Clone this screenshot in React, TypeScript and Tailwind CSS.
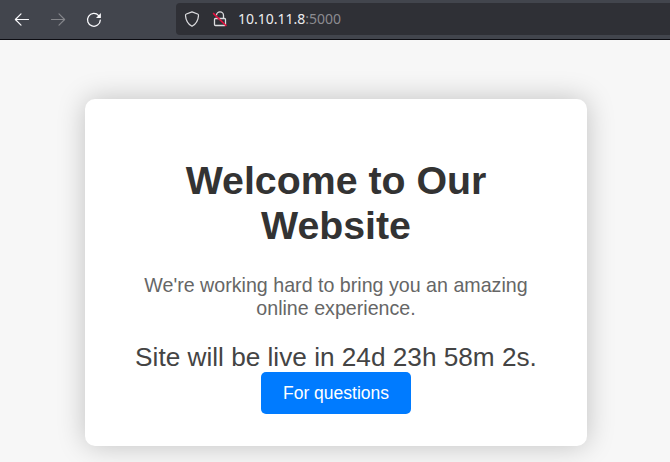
function BrowserBar() {
  return (
    <header className="flex h-10 shrink-0 items-start border-b border-[#0c0c12] bg-[#42454d]">
      <div className="flex h-[39px] w-44 shrink-0 items-center gap-5 pl-3.5">
        <svg className="size-4" viewBox="0 0 16 16" fill="none" stroke="#fbfbfe" strokeWidth="1.2" strokeLinecap="round" strokeLinejoin="round">
          <path d="M14.5 7.5H1.5M7 1.9L1.4 7.5 7 13.1" />
        </svg>
        <svg className="size-4" viewBox="0 0 16 16" fill="none" stroke="#85868b" strokeWidth="1.2" strokeLinecap="round" strokeLinejoin="round">
          <path d="M1.5 7.5h13M9 1.9l5.6 5.6L9 13.1" />
        </svg>
        <svg className="size-4" viewBox="0 0 16 16" fill="none" stroke="#fbfbfe" strokeWidth="1.25" strokeLinecap="round">
          <path d="M12.7 3.6A6.4 6.4 0 1 0 14.3 8.1" />
          <path d="M14.9 1v4.9H10z" fill="#fbfbfe" stroke="none" />
        </svg>
      </div>
      <div className="mt-[3px] flex h-8 flex-1 items-center rounded-l bg-[#2f3036] pl-2">
        <svg className="size-4" viewBox="0 0 16 16" fill="none" stroke="#dcdcdf" strokeWidth="1.2" strokeLinejoin="round">
          <path d="M8 .9L13.6 3Q14.6 3.4 14.5 4.6C14.2 9.2 12.1 13 8 15.3C3.9 13 1.8 9.2 1.5 4.6Q1.4 3.4 2.4 3z" />
        </svg>
        <svg className="ml-3 size-4" viewBox="0 0 16 16" fill="none" stroke="#dcdcdf" strokeWidth="1.3" strokeLinejoin="round">
          <rect x="2.5" y="7.5" width="11" height="7" rx="1" />
          <path d="M4.5 4.4a3.5 3.5 0 0 1 7 0v3.1" />
          <path d="M1.1 2.1L14.4 15" stroke="#e8103f" strokeWidth="1.6" />
        </svg>
        <span className="ml-2.5 font-['Noto_Sans',sans-serif] text-[14px] leading-5 text-[#ececef]">
          10.10.11.8<span className="text-[#8b8b90]">:5000</span>
        </span>
      </div>
    </header>
  );
}

export default function App() {
  return (
    <div className="flex h-[462px] w-[670px] flex-col overflow-hidden bg-[#f7f7f7] font-['Liberation_Sans',Arial,sans-serif]">
      <BrowserBar />
      <main className="ml-[85px] mt-[59px] flex h-[347px] w-[502px] shrink-0 flex-col items-center rounded-[10px] bg-white pt-[59px] text-center shadow-[0_0_28px_rgba(0,0,0,0.22)]">
        <h1 className="text-[39.3px] font-bold leading-[45px] text-[#333]">
          Welcome to Our
          <br />
          Website
        </h1>
        <p className="mt-[26px] text-[19.65px] leading-[23px] text-[#666]">
          We're working hard to bring you an amazing
          <br />
          online experience.
        </p>
        <div className="mt-[22px] whitespace-nowrap text-[26.2px] leading-[30px] text-[#444]">
          Site will be live in 24d 23h 58m 2s.
        </div>
        <button className="h-[42px] w-[150px] rounded-[5px] bg-[#007bff] text-[17.5px] leading-5 text-white">
          For questions
        </button>
      </main>
    </div>
  );
}
